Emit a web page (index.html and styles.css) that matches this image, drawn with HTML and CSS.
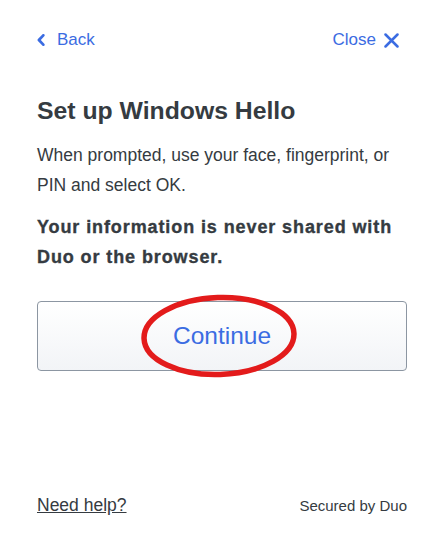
FILE: index.html
```html
<!DOCTYPE html>
<html lang="en">
<head>
<meta charset="utf-8">
<title>Set up Windows Hello</title>
<link rel="stylesheet" href="styles.css">
</head>
<body>
<div class="page">
  <header class="topbar">
    <a class="nav-link back" href="#">
      <svg class="chev" width="8" height="12" viewBox="0 0 8 12" aria-hidden="true"><path d="M6.3 1.3 L1.9 6 L6.3 10.7" fill="none" stroke="currentColor" stroke-width="2.7" stroke-linecap="round" stroke-linejoin="round"/></svg>
      <span>Back</span>
    </a>
    <a class="nav-link close" href="#">
      <span>Close</span>
      <svg class="xicon" width="15" height="15" viewBox="0 0 15 15" aria-hidden="true"><path d="M1.5 1.5 L13.5 13.5 M13.5 1.5 L1.5 13.5" fill="none" stroke="currentColor" stroke-width="2.5" stroke-linecap="round"/></svg>
    </a>
  </header>
  <main class="content">
    <h1 class="title">Set up Windows Hello</h1>
    <p class="lead">When prompted, use your face, fingerprint, or PIN and select OK.</p>
    <p class="note">Your information is never shared with Duo or the browser.</p>
    <div class="btn-wrap">
      <button class="continue" type="button">Continue</button>
      <svg class="circle" width="166" height="92" viewBox="0 0 166 92" aria-hidden="true"><ellipse cx="83" cy="46" rx="75" ry="38.5" fill="none" stroke="#e31b1b" stroke-width="5.5" transform="rotate(-2 83 46)"/></svg>
    </div>
  </main>
  <footer class="footer">
    <a class="help" href="#">Need help?</a>
    <span class="secured">Secured by Duo</span>
  </footer>
</div>
</body>
</html>
```
FILE: styles.css
```css
html, body {
  margin: 0;
  padding: 0;
  background: #ffffff;
}
body {
  font-family: "Liberation Sans", Arial, sans-serif;
  color: #353b41;
}
.page {
  height: 546px;
  box-sizing: border-box;
  padding: 30px 38px 30px 37px;
  display: flex;
  flex-direction: column;
}
.topbar {
  display: flex;
  justify-content: space-between;
  align-items: center;
  height: 20px;
}
.nav-link {
  display: flex;
  align-items: center;
  color: #3b6ce2;
  text-decoration: none;
  font-size: 17px;
  line-height: 20px;
}
.back .chev {
  margin-right: 12px;
}
.close {
  margin-right: 8px;
}
.close .xicon {
  margin-left: 8px;
}
.content {
  display: flex;
  flex-direction: column;
}
.title {
  margin: 46px 0 0;
  font-size: 24.75px;
  line-height: 30px;
  font-weight: bold;
}
.lead {
  margin: 14px 0 0;
  font-size: 17.5px;
  line-height: 30px;
}
.note {
  margin: 12px 0 0;
  font-size: 18px;
  line-height: 30px;
  font-weight: bold;
  letter-spacing: 0.9px;
  -webkit-text-stroke: 0.35px #353b41;
}
.btn-wrap {
  position: relative;
  margin-top: 29px;
}
.continue {
  display: block;
  width: 100%;
  height: 70px;
  box-sizing: border-box;
  border: 1px solid #8c96a2;
  border-radius: 4px;
  background: linear-gradient(#ffffff, #f2f4f7);
  color: #3b6ce2;
  font-family: "Liberation Sans", Arial, sans-serif;
  font-size: 24.5px;
  cursor: pointer;
}
.circle {
  position: absolute;
  left: 99px;
  top: -11px;
  pointer-events: none;
}
.footer {
  margin-top: auto;
  display: flex;
  justify-content: space-between;
  align-items: baseline;
}
.help {
  color: #353b41;
  font-size: 17.5px;
  line-height: 20px;
  text-decoration: underline;
}
.secured {
  font-size: 15px;
  line-height: 20px;
  color: #353b41;
}
```
